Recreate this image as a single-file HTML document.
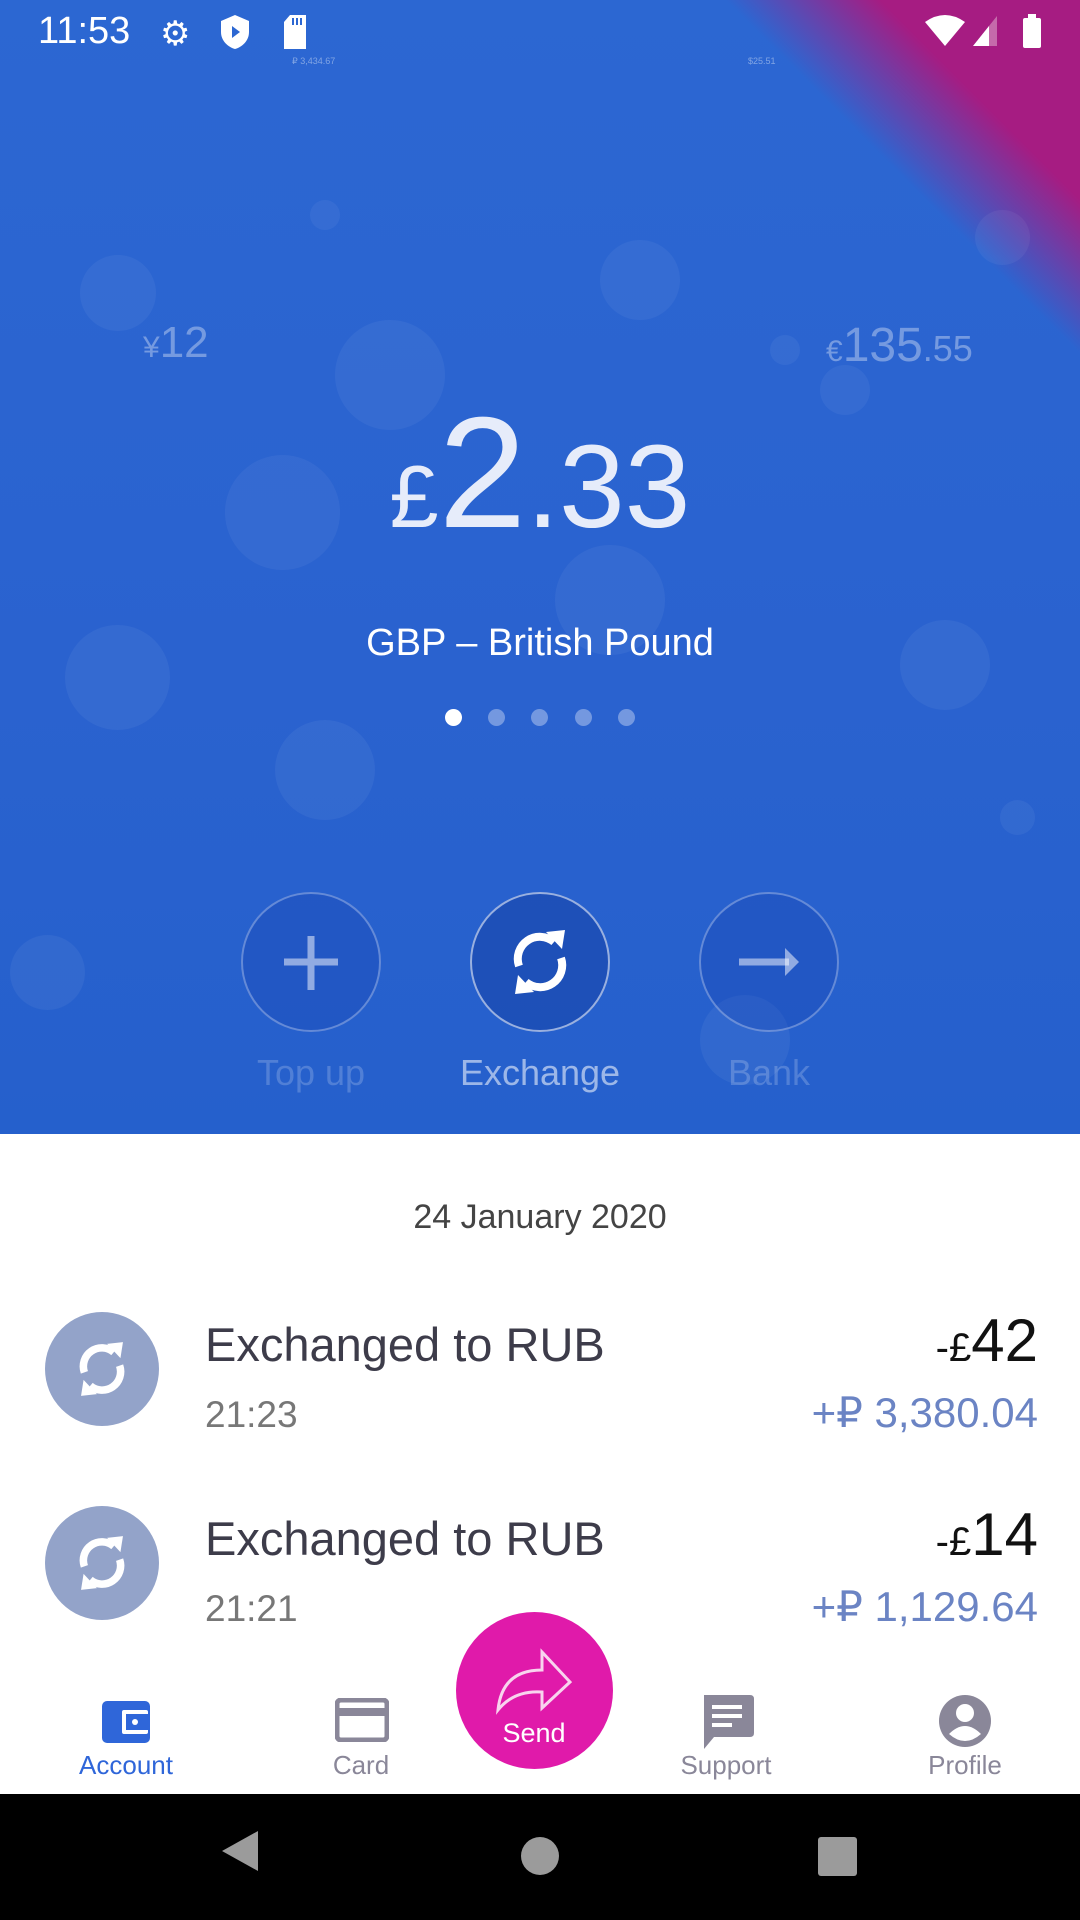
<!DOCTYPE html>
<html><head><meta charset="utf-8"><style>
*{margin:0;padding:0;box-sizing:border-box}
body{width:1080px;height:1920px;overflow:hidden;font-family:"Liberation Sans",sans-serif;background:#fff;position:relative}
.hdr{position:absolute;left:0;top:0;width:1080px;height:1134px;background:linear-gradient(180deg,#2c67d2 0%,#2a62cf 60%,#2560cc 100%);overflow:hidden}
.mag{position:absolute;left:0;top:0;width:1080px;height:1134px;background:linear-gradient(225deg,#a61c82 0%,#a61c82 9%,rgba(60,90,200,0) 16%)}
.b{position:absolute;border-radius:50%;background:rgba(255,255,255,0.05)}
.t{position:absolute;white-space:nowrap}
.circ{position:absolute;width:140px;height:140px;border-radius:50%;border:2px solid rgba(255,255,255,0.3);background:rgba(20,60,170,0.25)}
.row{position:absolute;left:0;width:1080px}
.ic{position:absolute;left:45px;width:114px;height:114px;border-radius:50%;background:#93a3c9}
.nav{position:absolute;top:1794px;left:0;width:1080px;height:126px;background:#000}
.nl{position:absolute;top:1750px;font-size:26px;color:#8a8799;transform:translateX(-50%)}
</style></head><body>
<div class="hdr">
 <div class="mag"></div>
 <div class="b" style="left:80px;top:255px;width:76px;height:76px"></div>
 <div class="b" style="left:335px;top:320px;width:110px;height:110px"></div>
 <div class="b" style="left:225px;top:455px;width:115px;height:115px"></div>
 <div class="b" style="left:65px;top:625px;width:105px;height:105px"></div>
 <div class="b" style="left:275px;top:720px;width:100px;height:100px"></div>
 <div class="b" style="left:555px;top:545px;width:110px;height:110px"></div>
 <div class="b" style="left:820px;top:365px;width:50px;height:50px"></div>
 <div class="b" style="left:975px;top:210px;width:55px;height:55px"></div>
 <div class="b" style="left:10px;top:935px;width:75px;height:75px"></div>
 <div class="b" style="left:700px;top:995px;width:90px;height:90px"></div>
 <div class="b" style="left:600px;top:240px;width:80px;height:80px"></div>
 <div class="b" style="left:900px;top:620px;width:90px;height:90px"></div>
 <div class="b" style="left:770px;top:335px;width:30px;height:30px"></div>
 <div class="b" style="left:310px;top:200px;width:30px;height:30px"></div>
 <div class="b" style="left:1000px;top:800px;width:35px;height:35px"></div>
 <div class="t" style="left:38px;top:10px;font-size:38px;color:#fff">11:53</div>
 <div class="t" style="left:160px;top:14px;font-size:34px;color:#fff">⚙</div>
 <svg class="t" style="left:220px;top:14px" width="30" height="36"><path d="M15 1 L29 7 V18 C29 27 22 33 15 35 C8 33 1 27 1 18 V7Z" fill="#fff"/><path d="M12 12 L20 18 L12 24Z" fill="#2c67d2"/></svg>
 <svg class="t" style="left:282px;top:15px" width="26" height="34"><path d="M8 0 H24 V34 H2 V7Z" fill="#fff"/><path d="M11 3v7M15 3v7M19 3v7" stroke="#2c67d2" stroke-width="2"/></svg>
 <svg class="t" style="left:925px;top:14px" width="122" height="34"><path d="M0 8 Q20 -6 40 8 L20 32Z" fill="#fff"/><path d="M48 32 L72 2 V32Z" fill="#c56aab"/><path d="M48 32 L64 12 V32Z" fill="#fff"/><rect x="98" y="4" width="18" height="30" rx="2" fill="#fff"/><rect x="103" y="0" width="8" height="5" fill="#fff"/></svg>
 <div class="t" style="left:292px;top:56px;font-size:9px;color:rgba(255,255,255,.4)">₽ 3,434.67</div>
 <div class="t" style="left:748px;top:56px;font-size:9px;color:rgba(255,255,255,.4)">$25.51</div>
 <div class="t" style="left:143px;top:318px;font-size:44px;color:rgba(255,255,255,.35)"><span style="font-size:30px">¥</span>12</div>
 <div class="t" style="left:826px;top:318px;font-size:48px;color:rgba(255,255,255,.35)"><span style="font-size:30px">€</span>135<span style="font-size:36px">.55</span></div>
 <div class="t" style="left:0;width:1080px;text-align:center;top:393px;color:#e6ecfa;font-size:118px;line-height:160px"><span style="font-size:88px">£</span><span style="font-size:158px">2</span>.33</div>
 <div class="t" style="left:0;width:1080px;text-align:center;top:622px;font-size:38px;color:#fff">GBP – British Pound</div>
 <div class="t" style="left:445px;top:709px;width:17px;height:17px;border-radius:50%;background:#fff"></div>
 <div class="t" style="left:488px;top:709px;width:17px;height:17px;border-radius:50%;background:rgba(255,255,255,.35)"></div>
 <div class="t" style="left:531px;top:709px;width:17px;height:17px;border-radius:50%;background:rgba(255,255,255,.35)"></div>
 <div class="t" style="left:575px;top:709px;width:17px;height:17px;border-radius:50%;background:rgba(255,255,255,.35)"></div>
 <div class="t" style="left:618px;top:709px;width:17px;height:17px;border-radius:50%;background:rgba(255,255,255,.35)"></div>
 <div class="circ" style="left:241px;top:892px"><svg width="136" height="136"><path d="M68 42 V96 M41 68 H95" stroke="rgba(255,255,255,.5)" stroke-width="7"/></svg></div>
 <div class="circ" style="left:470px;top:892px;border-color:rgba(255,255,255,.55);background:rgba(20,60,160,.45)"><svg width="136" height="136" viewBox="0 0 136 136"><path d="M47 72 A22 22 0 0 1 82 48" fill="none" stroke="#fff" stroke-width="8"/><path d="M74 38 L93 36 L90 55Z" fill="#fff"/><path d="M89 64 A22 22 0 0 1 54 88" fill="none" stroke="#fff" stroke-width="8"/><path d="M62 98 L43 100 L46 81Z" fill="#fff"/></svg></div>
 <div class="circ" style="left:699px;top:892px"><svg width="136" height="136"><path d="M38 68 H88" stroke="rgba(255,255,255,.5)" stroke-width="7"/><path d="M84 54 L98 68 L84 82Z" fill="rgba(255,255,255,.5)"/></svg></div>
 <div class="t" style="left:311px;top:1052px;transform:translateX(-50%);font-size:36px;color:rgba(255,255,255,.2)">Top up</div>
 <div class="t" style="left:540px;top:1052px;transform:translateX(-50%);font-size:36px;color:rgba(255,255,255,.55)">Exchange</div>
 <div class="t" style="left:769px;top:1052px;transform:translateX(-50%);font-size:36px;color:rgba(255,255,255,.2)">Bank</div>
</div>
<div class="t" style="left:0;width:1080px;text-align:center;top:1198px;font-size:34px;color:#444">24 January 2020</div>
<div class="row" style="top:0">
 <div class="ic" style="top:1312px"><svg width="114" height="114" viewBox="0 0 136 136"><path d="M47 72 A22 22 0 0 1 82 48" fill="none" stroke="#fff" stroke-width="9"/><path d="M74 38 L93 36 L90 55Z" fill="#fff"/><path d="M89 64 A22 22 0 0 1 54 88" fill="none" stroke="#fff" stroke-width="9"/><path d="M62 98 L43 100 L46 81Z" fill="#fff"/></svg></div>
 <div class="t" style="left:205px;top:1317px;font-size:47px;color:#3d3c4a">Exchanged to RUB</div>
 <div class="t" style="left:205px;top:1394px;font-size:37px;color:#777">21:23</div>
 <div class="t" style="right:42px;top:1306px;font-size:60px;color:#111"><span style="font-size:40px">-£</span>42</div>
 <div class="t" style="right:42px;top:1388px;font-size:42px;color:#6b84c4">+₽ 3,380.04</div>
</div>
<div class="row">
 <div class="ic" style="top:1506px"><svg width="114" height="114" viewBox="0 0 136 136"><path d="M47 72 A22 22 0 0 1 82 48" fill="none" stroke="#fff" stroke-width="9"/><path d="M74 38 L93 36 L90 55Z" fill="#fff"/><path d="M89 64 A22 22 0 0 1 54 88" fill="none" stroke="#fff" stroke-width="9"/><path d="M62 98 L43 100 L46 81Z" fill="#fff"/></svg></div>
 <div class="t" style="left:205px;top:1511px;font-size:47px;color:#3d3c4a">Exchanged to RUB</div>
 <div class="t" style="left:205px;top:1588px;font-size:37px;color:#777">21:21</div>
 <div class="t" style="right:42px;top:1500px;font-size:60px;color:#111"><span style="font-size:40px">-£</span>14</div>
 <div class="t" style="right:42px;top:1582px;font-size:42px;color:#6b84c4">+₽ 1,129.64</div>
</div>
<div style="position:absolute;left:0;top:1670px;width:1080px;height:124px;background:#fff"></div>
<svg class="t" style="left:102px;top:1697px" width="50" height="48"><rect x="0" y="4" width="48" height="42" rx="5" fill="#2f66d9"/><rect x="20" y="13" width="26" height="24" rx="2" fill="#fff"/><rect x="24" y="17" width="22" height="16" fill="#2f66d9"/><circle cx="33" cy="25" r="3" fill="#fff"/></svg>
<svg class="t" style="left:335px;top:1698px" width="54" height="44"><rect x="2" y="2" width="50" height="40" rx="4" fill="none" stroke="#8a8799" stroke-width="5"/><rect x="2" y="10" width="50" height="8" fill="#8a8799"/></svg>
<svg class="t" style="left:700px;top:1695px" width="54" height="56"><path d="M4 0 H50 Q54 0 54 4 V38 Q54 42 50 42 H14 L4 54Z" fill="#8a8799"/><path d="M12 12H42M12 21H42M12 30H32" stroke="#fff" stroke-width="4"/></svg>
<svg class="t" style="left:938px;top:1694px" width="54" height="54"><circle cx="27" cy="27" r="26" fill="#8a8799"/><circle cx="27" cy="19" r="9" fill="#fff"/><path d="M11 40 Q27 24 43 40 Q27 54 11 40Z" fill="#fff"/></svg>
<div class="nl" style="left:126px;color:#2f66d9">Account</div>
<div class="nl" style="left:361px">Card</div>
<div class="nl" style="left:726px">Support</div>
<div class="nl" style="left:965px">Profile</div>
<div class="t" style="left:456px;top:1612px;width:157px;height:157px;border-radius:50%;background:#e01aaa"></div>
<svg class="t" style="left:492px;top:1640px" width="84" height="80"><path d="M6 70 Q10 30 50 30 L50 12 L78 42 L50 68 L50 52 Q22 50 6 70Z" fill="none" stroke="#f8d4ee" stroke-width="3"/></svg>
<div class="t" style="left:534px;top:1718px;transform:translateX(-50%);font-size:27px;color:#fff">Send</div>
<div class="nav">
 <svg style="position:absolute;left:220px;top:35px" width="40" height="44"><path d="M38 2 V42 L2 22Z" fill="#9b9b9b"/></svg>
 <div style="position:absolute;left:521px;top:43px;width:38px;height:38px;border-radius:50%;background:#9b9b9b"></div>
 <div style="position:absolute;left:818px;top:43px;width:39px;height:39px;border-radius:3px;background:#9b9b9b"></div>
</div>
</body></html>
